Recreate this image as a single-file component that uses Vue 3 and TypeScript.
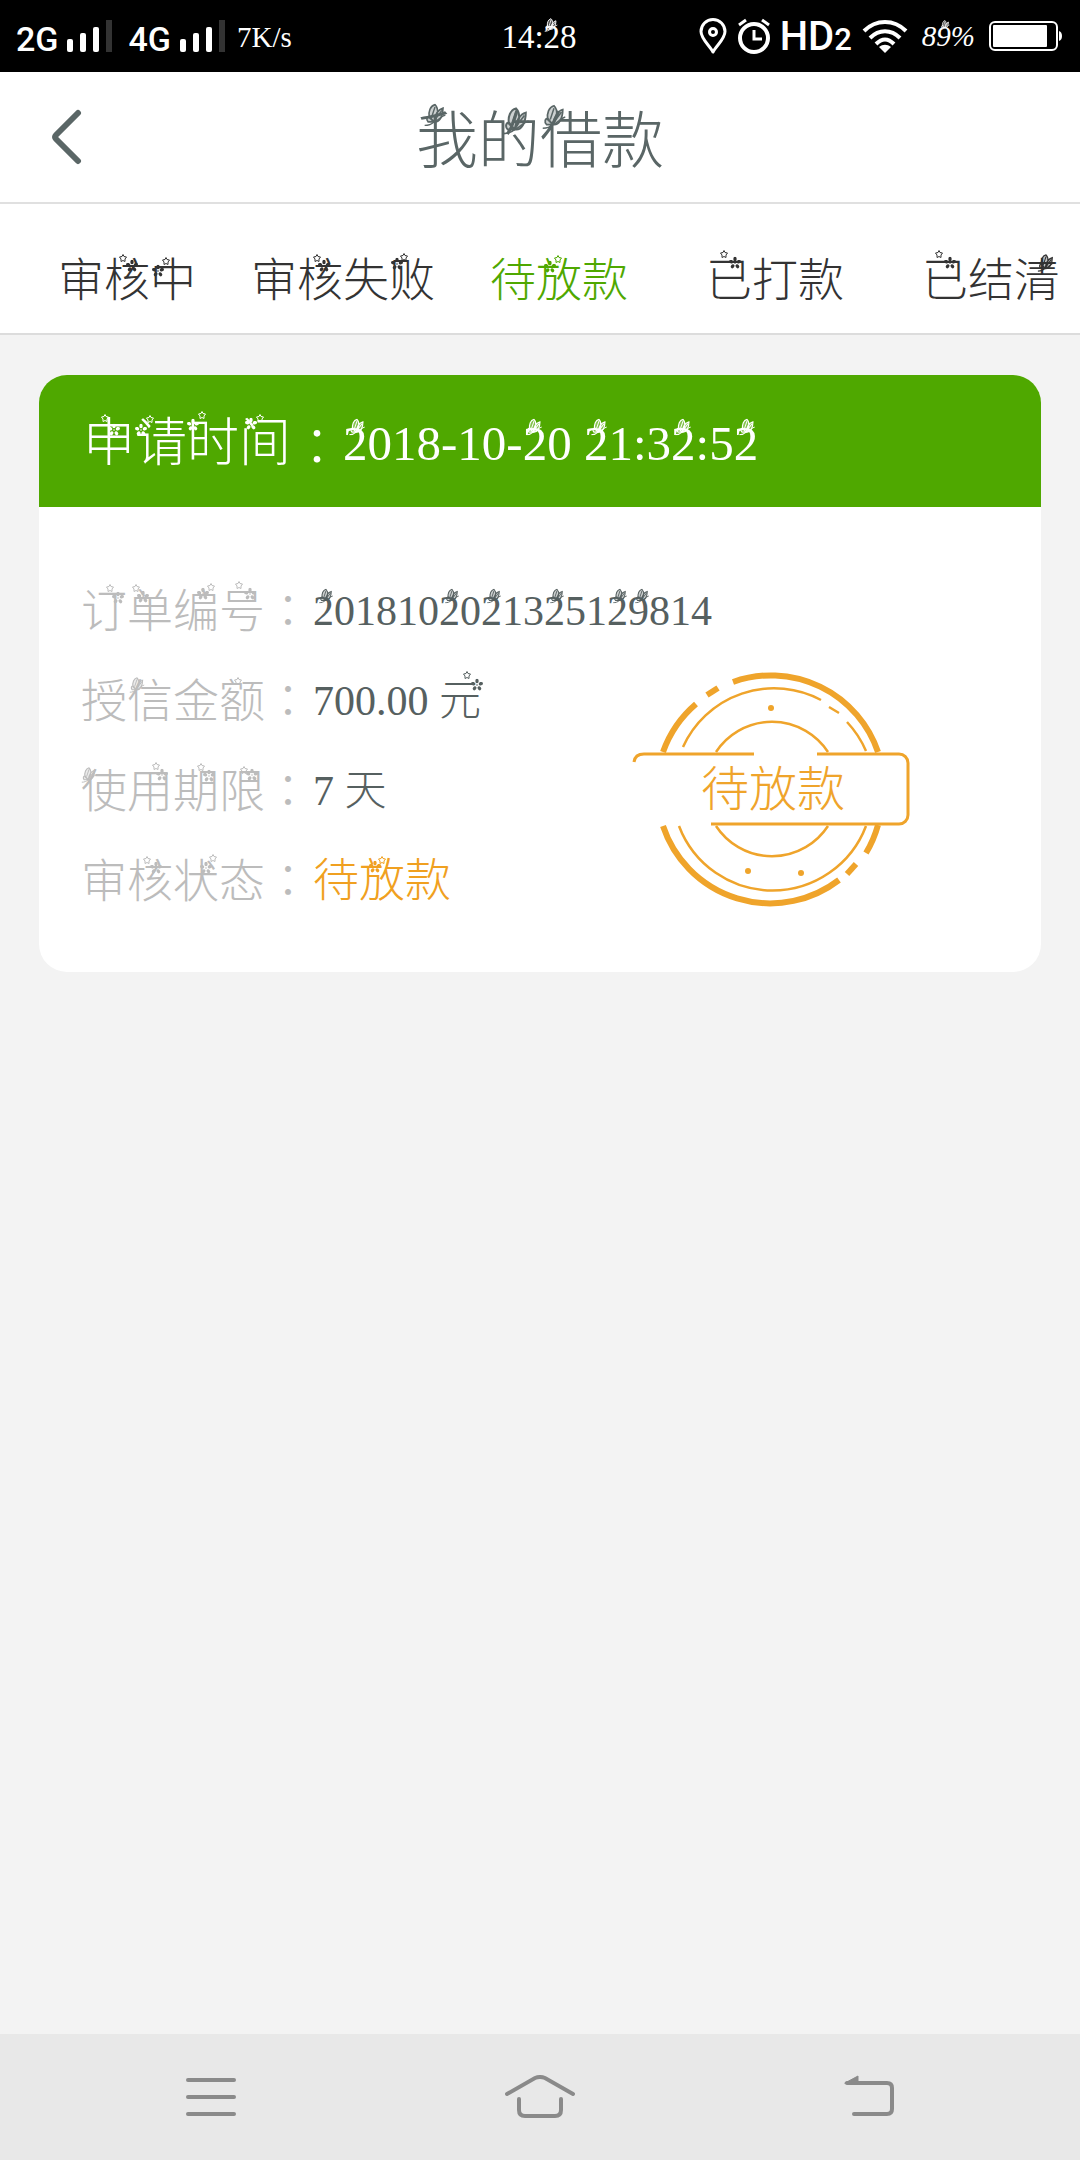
<script setup lang="ts">
import { h, ref, type FunctionalComponent } from 'vue'

type Kind = 'small' | 'big' | 'wing'
// kind, x from the start of the text, y from the middle of its line, optional size
type Mark = [Kind, number, number, number?]

const sizes: Record<Kind, number> = { small: 8, big: 13, wing: 15 }

// Text decorated with small flowers and butterflies that sit over the glyphs
const Ornate: FunctionalComponent<{ text: string; marks?: Mark[] }> = (props) =>
  h('span', { class: 'ornate' }, [
    props.text,
    h(
      'svg',
      { class: 'ornate-marks', width: 1, height: 1, 'aria-hidden': 'true' },
      (props.marks ?? []).map(([kind, x, y, size]) => {
        const s = size ?? sizes[kind]
        return h('use', {
          href: kind === 'wing' ? '#butterfly' : kind === 'big' ? '#blossom' : '#floret',
          x: x - s / 2,
          y: y - s / 2,
          width: s,
          height: s,
        })
      }),
    ),
  ])
Ornate.props = ['text', 'marks']

const titleMarks: Mark[] = [['wing', 19, -27, 23], ['wing', 100, -21, 28], ['wing', 138, -25, 25]]

const tabs: { name: string; marks: Mark[] }[] = [
  { name: '审核中', marks: [['small', 65, -23], ['big', 74, -15], ['small', 108, -20], ['big', 100, -10]] },
  { name: '审核失败', marks: [['small', 66, -23], ['big', 73, -15], ['small', 153, -24], ['big', 146, -17]] },
  { name: '待放款', marks: [['small', 68, -22], ['big', 60, -14]] },
  { name: '已打款', marks: [['small', 18, -27], ['big', 29, -18]] },
  { name: '已结清', marks: [['small', 17, -27], ['big', 28, -18], ['wing', 124, -18, 18]] },
]
const active = ref(2)

const applyLabelMarks: Mark[] = [
  ['small', 22, -26], ['big', 31, -14], ['small', 67, -25], ['big', 58, -14],
  ['small', 119, -29], ['big', 110, -19], ['small', 177, -26], ['big', 168, -20],
]
const applyTimeMarks: Mark[] = [
  ['wing', 14, -17, 17], ['wing', 191, -17, 17], ['wing', 256, -17, 17], ['wing', 340, -17, 17], ['wing', 404, -17, 17],
]

interface Row { label: string; value: string; state?: boolean; labelMarks: Mark[]; valueMarks: Mark[] }
const rows: Row[] = [
  {
    label: '订单编号',
    value: '2018102021325129814',
    labelMarks: [
      ['small', 29, -24], ['big', 37, -14], ['small', 55, -24], ['big', 62, -15],
      ['small', 130, -25], ['big', 122, -18], ['small', 158, -27], ['big', 169, -18],
    ],
    valueMarks: [
      ['wing', 13, -15], ['wing', 139, -15], ['wing', 181, -15],
      ['wing', 244, -15], ['wing', 307, -15], ['wing', 329, -15],
    ],
  },
  {
    label: '授信金额',
    value: '700.00 元',
    labelMarks: [['wing', 56, -17, 16], ['small', 157, -21]],
    valueMarks: [['small', 154, -26], ['big', 164, -16]],
  },
  {
    label: '使用期限',
    value: '7 天',
    labelMarks: [
      ['wing', 8, -17, 16], ['small', 75, -26], ['big', 81, -17],
      ['small', 120, -25], ['big', 128, -16], ['small', 163, -22], ['big', 171, -17],
    ],
    valueMarks: [],
  },
  {
    label: '审核状态',
    value: '待放款',
    state: true,
    labelMarks: [['small', 66, -22], ['big', 75, -14], ['small', 132, -24], ['big', 125, -14]],
    valueMarks: [['small', 69, -21], ['big', 62, -14]],
  },
]
</script>

<template>
  <div class="page">
    <svg class="symbols" width="0" height="0" aria-hidden="true">
      <symbol id="floret" viewBox="0 0 16 16">
        <path d="M8 1L10 5L15 6L12 10L12 15L8 13L4 15L4 10L1 6L6 5Z" fill="none" stroke="currentColor" stroke-width="2" stroke-linejoin="round" />
      </symbol>
      <symbol id="blossom" viewBox="0 0 16 16">
        <g fill="currentColor">
          <ellipse cx="8" cy="3" rx="2.1" ry="2.7" />
          <ellipse cx="8" cy="3" rx="2.1" ry="2.7" transform="rotate(72 8 8)" />
          <ellipse cx="8" cy="3" rx="2.1" ry="2.7" transform="rotate(144 8 8)" />
          <ellipse cx="8" cy="3" rx="2.1" ry="2.7" transform="rotate(216 8 8)" />
          <ellipse cx="8" cy="3" rx="2.1" ry="2.7" transform="rotate(288 8 8)" />
          <circle cx="8" cy="8" r="1" />
        </g>
      </symbol>
      <symbol id="butterfly" viewBox="0 0 20 20">
        <path d="M10 1C6 2 4 7 5 12L9 16C12 12 14 5 10 1ZM17 4C13 5 10 10 9 16C14 17 17 11 17 4ZM5 11C3 11 2 14 4 16L9 16Z" fill="currentColor" fill-opacity=".3" stroke="currentColor" stroke-width="1.4" />
        <path d="M1 19C4 19 7 18 9 16C13 15 15 11 19 10M7 12L10 3M10 14L16 6" fill="none" stroke="currentColor" stroke-width="1.2" />
      </symbol>
    </svg>

    <header class="status">
      <div class="side">
        <span class="net">2G</span>
        <svg class="bars" width="46" height="34" viewBox="0 0 46 34"><g fill="#fff"><rect x="1" y="20" width="6" height="13" rx="2" /><rect x="14" y="14" width="6" height="19" rx="2" /><rect x="27" y="8" width="6" height="25" rx="2" /></g><rect x="40" y="1" width="6" height="32" fill="#333" /></svg>
        <span class="net second">4G</span>
        <svg class="bars" width="46" height="34" viewBox="0 0 46 34"><g fill="#fff"><rect x="1" y="20" width="6" height="13" rx="2" /><rect x="14" y="14" width="6" height="19" rx="2" /><rect x="27" y="8" width="6" height="25" rx="2" /></g><rect x="40" y="1" width="6" height="32" fill="#333" /></svg>
        <span class="speed">7K/s</span>
      </div>
      <Ornate class="clock" text="14:28" :marks="[['wing', 50, -11, 14]]" />
      <div class="side end">
        <svg width="28" height="36" viewBox="0 0 28 36" fill="none" stroke="#fff" stroke-width="3"><path d="M14 34C11 28 2 21 2 13.500A12 12 0 0 1 26 13.500C26 21 17 28 14 34Z" stroke-linejoin="round" /><circle cx="14" cy="14" r="3.500" /></svg>
        <svg class="alarm" width="34" height="36" viewBox="0 0 34 36" fill="none" stroke="#fff" stroke-width="4"><circle cx="17" cy="20" r="14" /><path d="M17 12V21H25M2 7L9 2M32 7L25 2" stroke-width="3" /></svg>
        <span class="hd">HD<small>2</small></span>
        <svg class="wifi" width="46" height="34" viewBox="0 0 46 34"><g fill="none" stroke="#fff" stroke-width="4"><path d="M2 12C14 0 32 0 44 12" /><path d="M8 19C17 10 29 10 38 19" /><path d="M14 25C20 19 26 19 32 25" /></g><path d="M17 28C21 25 25 25 29 28L23 34Z" fill="#fff" /></svg>
        <Ornate class="charge" text="89%" :marks="[['wing', 23, -11, 10]]" />
        <svg width="73" height="30" viewBox="0 0 73 30"><rect x="1" y="1" width="67" height="28" rx="5" fill="none" stroke="#fff" stroke-width="2" /><rect x="4" y="4" width="54" height="22" rx="1" fill="#fff" /><path d="M70 10Q73 11 73 15T70 20Z" fill="#fff" /></svg>
      </div>
    </header>

    <header class="title-bar">
      <button class="back" type="button" aria-label="返回">
        <svg width="32" height="56" viewBox="0 0 32 56"><path d="M28 4L6 26Q4 28 6 30L28 52" fill="none" stroke="currentColor" stroke-width="6" stroke-linecap="round" /></svg>
      </button>
      <h1><Ornate text="我的借款" :marks="titleMarks" /></h1>
    </header>

    <nav class="tabs">
      <button v-for="(tab, i) in tabs" :key="tab.name" type="button" :class="{ active: i === active }" @click="active = i">
        <Ornate :text="tab.name" :marks="tab.marks" />
      </button>
    </nav>

    <main>
      <article class="card">
        <h2>
          <Ornate text="申请时间" :marks="applyLabelMarks" /><span class="colon">：</span>
          <Ornate class="time" text="2018-10-20 21:32:52" :marks="applyTimeMarks" />
        </h2>
        <div class="body">
          <dl>
            <div v-for="row in rows" :key="row.label" class="row">
              <dt><Ornate :text="row.label" :marks="row.labelMarks" /><span class="colon">：</span></dt>
              <dd :class="{ state: row.state }"><Ornate :text="row.value" :marks="row.valueMarks" /></dd>
            </div>
          </dl>
          <svg class="stamp" width="282" height="240" viewBox="20 20 282 240">
            <g fill="none" stroke="#efa42b">
              <g stroke-width="6">
                <path d="M123 32A113 113 0 0 1 268 102" /><path d="M97 45L108 38" />
                <path d="M53 102A113 113 0 0 1 86 54" /><path d="M268 175A113 113 0 0 1 256 203" />
                <path d="M246 214L237 224" /><path d="M229 230A113 113 0 0 1 53 176" />
              </g>
              <g stroke-width="2.500">
                <path d="M73 97A100 100 0 0 1 211 50M219 57L229 63M237 72A100 100 0 0 1 256 101" />
                <path d="M256 176A100 100 0 0 1 69 176" />
                <path d="M106 102A67 67 0 0 1 218 102M218 176A67 67 0 0 1 106 176" />
              </g>
              <path d="M24 112Q25 104 34 104H144M207 104H289A9 9 0 0 1 298 113V165A9 9 0 0 1 289 174H101" stroke-width="3" />
            </g>
            <g fill="#efa42b"><circle cx="161" cy="58" r="3" /><circle cx="138" cy="221" r="3" /><circle cx="191" cy="223" r="3" /></g>
            <text x="163" y="156" text-anchor="middle">待放款</text>
          </svg>
        </div>
      </article>
    </main>

    <nav class="keys">
      <button type="button" aria-label="菜单"><svg width="50" height="44" viewBox="0 0 50 44"><path d="M2 5H48M2 22H48M2 39H48" /></svg></button>
      <button type="button" aria-label="主页"><svg width="72" height="44" viewBox="0 0 72 44"><path d="M3 19L31 3Q36 1 41 3L69 19M15 24V35Q15 41 21 41H51Q57 41 57 35V24" /></svg></button>
      <button type="button" aria-label="返回"><svg width="52" height="44" viewBox="0 0 52 44"><path d="M4 8H44Q49 8 49 13V34Q49 39 44 39H11" /><path d="M2 8L15 1V8Z" class="tip" /></svg></button>
    </nav>
  </div>
</template>

<style>
body {
  margin: 0;
}
.ornate {
  position: relative;
  display: inline-block;
  white-space: nowrap;
}
.ornate-marks {
  position: absolute;
  left: 0;
  top: 50%;
  overflow: visible;
  pointer-events: none;
}
</style>

<style scoped>
.page {
  display: flex;
  flex-direction: column;
  min-height: 100vh;
  background: #f3f3f3;
  color: #333;
  font-family: "Liberation Serif", "Noto Sans CJK SC", serif;
  font-weight: 300;
}
.symbols {
  position: absolute;
}
button {
  border: 0;
  padding: 0;
  background: none;
  color: inherit;
  font: inherit;
  cursor: pointer;
}
.status {
  display: flex;
  align-items: center;
  height: 72px;
  padding: 0 18px 0 16px;
  background: #000;
  color: #fff;
}
.side {
  display: flex;
  flex: 1;
  align-items: center;
}
.end {
  justify-content: flex-end;
}
.net,
.hd {
  font-family: Roboto, sans-serif;
  font-weight: 500;
}
.net {
  font-size: 34px;
  line-height: 40px;
  padding-top: 6px;
}
.second {
  margin-left: 16px;
}
.bars {
  margin-left: 8px;
}
.speed {
  margin-left: 12px;
  padding-top: 2px;
  font-size: 29px;
}
.clock {
  padding-top: 2px;
  font-size: 33px;
}
.alarm {
  margin-left: 10px;
}
.hd {
  margin-left: 9px;
  font-size: 40px;
}
.hd small {
  font-size: 31px;
}
.wifi {
  margin-left: 10px;
}
.charge {
  margin: 0 14px;
  font-size: 29px;
  font-style: italic;
}
.title-bar {
  display: grid;
  grid-template-columns: 120px 1fr 120px;
  align-items: center;
  height: 130px;
  border-bottom: 2px solid #e0e0e0;
  background: #fff;
  color: #5a6666;
}
.back {
  display: flex;
  justify-content: center;
  padding-left: 12px;
}
h1 {
  margin: 0;
  padding-top: 10px;
  text-align: center;
  font-size: 62px;
  line-height: 72px;
  font-weight: 300;
}
.tabs {
  display: flex;
  height: 129px;
  padding-left: 19px;
  overflow: hidden;
  border-bottom: 2px solid #dcdcdc;
  background: #fff;
}
.tabs button {
  flex: 0 0 20vw;
  padding-top: 25px;
  font-size: 46px;
  line-height: 56px;
}
.tabs .active {
  color: #4fa800;
}
main {
  flex: 1;
  padding: 40px 39px;
}
.card {
  overflow: hidden;
  border-radius: 28px;
  background: #fff;
}
h2 {
  display: flex;
  align-items: center;
  height: 126px;
  margin: 0;
  padding: 6px 44px 0;
  background: #4fa800;
  color: #fff;
  font-size: 52px;
  line-height: 60px;
  font-weight: 300;
}
.time {
  font-size: 49px;
}
.colon {
  font-family: "Noto Sans CJK TC", sans-serif;
}
.body {
  position: relative;
  padding: 59px 42px 46px;
}
dl {
  margin: 0;
}
.row {
  display: flex;
  align-items: center;
  height: 90px;
  line-height: 56px;
}
dt {
  padding-bottom: 4px;
  color: #bcbcbc;
  font-size: 46px;
}
dd {
  margin: 0;
  padding-left: 2px;
  color: #566060;
  font-size: 42px;
}
.state {
  color: #f0a020;
  font-size: 46px;
}
.stamp {
  position: absolute;
  top: 163px;
  right: 129px;
}
.stamp text {
  fill: #efa42b;
  font-family: "Noto Sans CJK SC", sans-serif;
  font-size: 48px;
  font-weight: 300;
}
.keys {
  display: flex;
  height: 126px;
  padding: 0 46px;
  background: #e8e8e8;
}
.keys button {
  display: flex;
  flex: 1;
  align-items: center;
  justify-content: center;
}
.keys path {
  fill: none;
  stroke: #8a8a8a;
  stroke-width: 4;
  stroke-linecap: round;
}
.keys .tip {
  fill: #8a8a8a;
  stroke-width: 1;
}
</style>
